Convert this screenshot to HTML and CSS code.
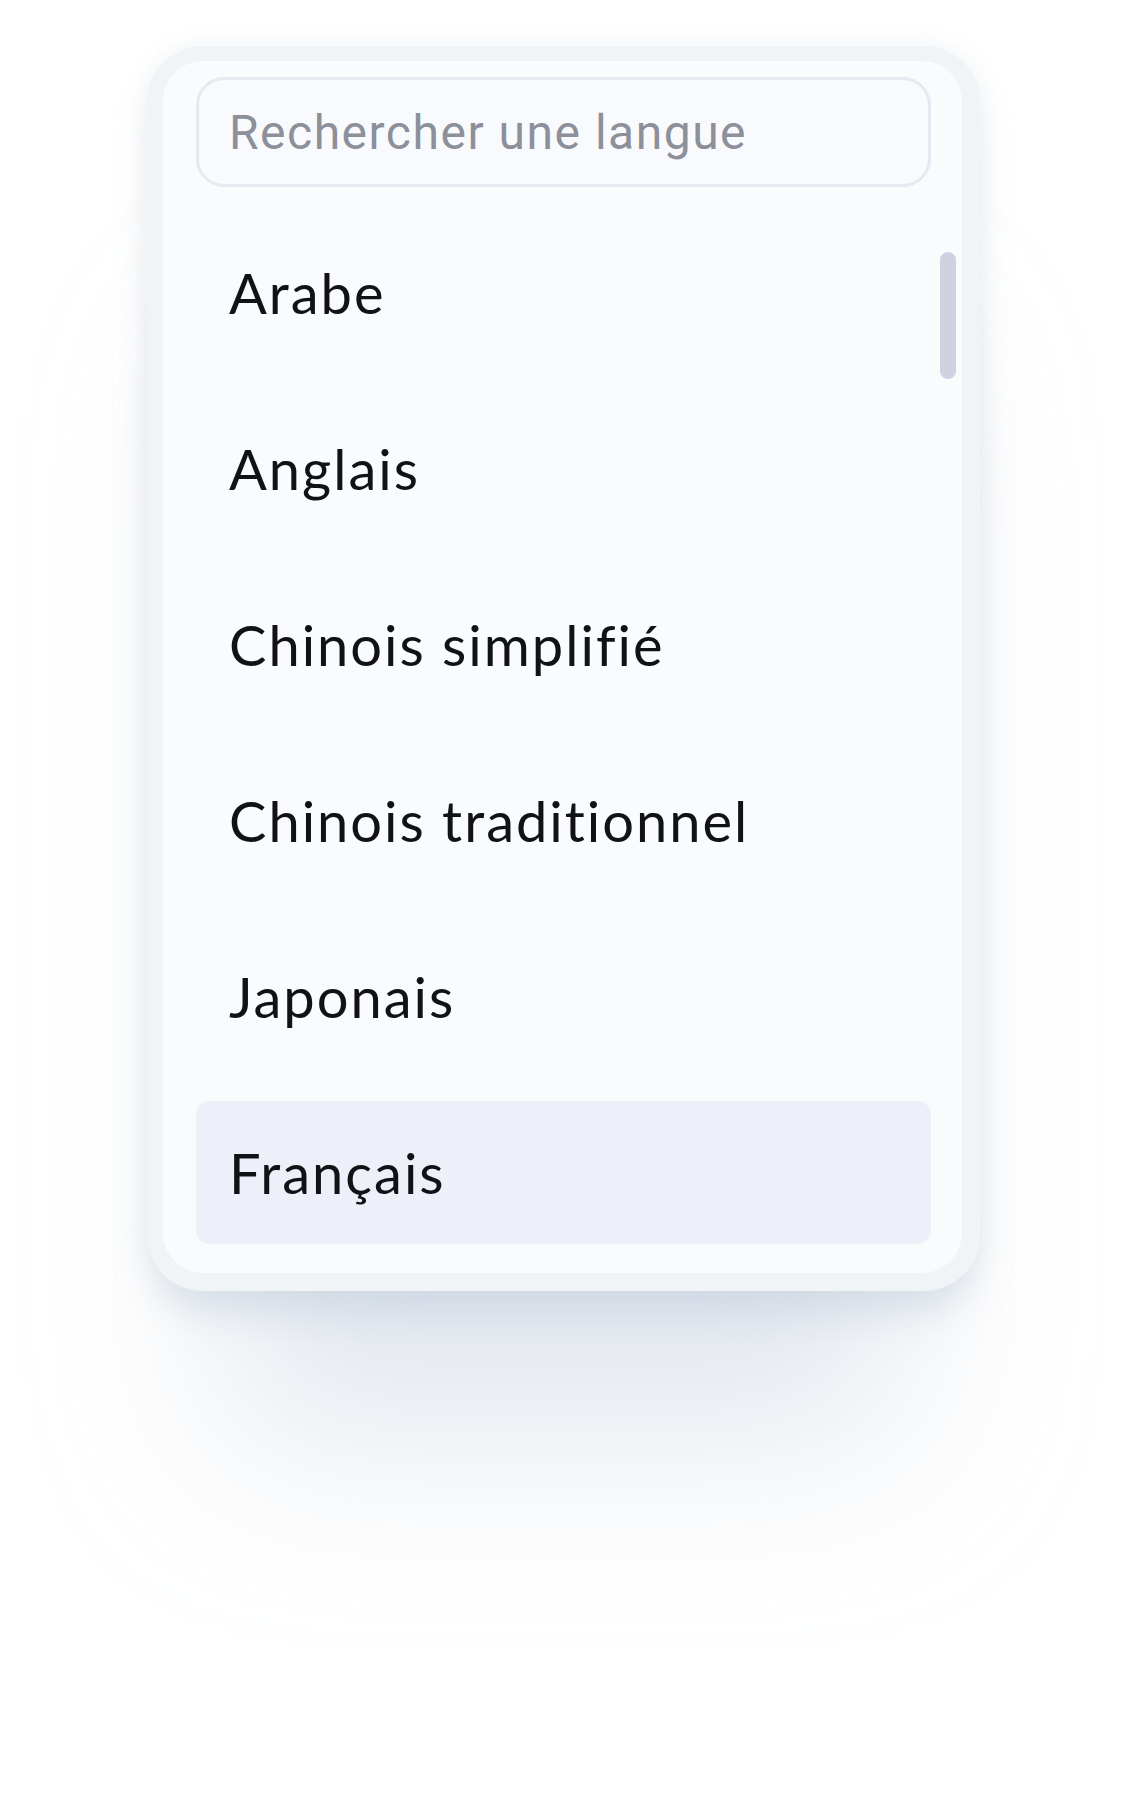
FILE: index.html
```html
<!DOCTYPE html>
<html lang="fr">
<head>
  <meta charset="UTF-8" />
  <meta name="viewport" content="width=device-width, initial-scale=1.0" />
  <title>Langues</title>
  <link rel="stylesheet" href="styles.css">
</head>
<body>
  <div class="card">
    <div class="panel">
      <input class="search" type="text" placeholder="Rechercher une langue" />
      <div class="scrollbar"></div>
      <ul class="list">
        <li class="item">Arabe</li>
        <li class="item">Anglais</li>
        <li class="item">Chinois simplifié</li>
        <li class="item">Chinois traditionnel</li>
        <li class="item">Japonais</li>
        <li class="item selected">Français</li>
      </ul>
    </div>
  </div>
</body>
</html>
```

FILE: styles.css
```css
body {
  margin: 0;
  padding: 0;
  background: #ffffff;
  font-family: Lato, "Noto Sans", sans-serif;
  height: 1812px;
  overflow: hidden;
}
.card {
  box-sizing: border-box;
  width: 833px;
  margin: 46px 0 0 147px;
  padding: 15px 18px 18px 16px;
  border-radius: 56px;
  background: #f1f4f7;
  box-shadow: 0 0 24px rgba(205, 214, 226, 0.3),
    0 30px 40px -10px rgba(170, 185, 205, 0.35),
    0 230px 170px -80px rgba(175, 190, 210, 0.35);
}
.panel {
  position: relative;
  padding: 16px 31px 29px 33px;
  border-radius: 40px;
  background: #fafbfd;
}
.search {
  display: block;
  box-sizing: border-box;
  width: 100%;
  height: 110px;
  padding: 0 30px;
  border: 3px solid #e7e9f2;
  border-radius: 28px;
  background: #f9fafd;
  font-family: Roboto, "Open Sans", sans-serif;
  font-size: 48px;
  letter-spacing: 1.5px;
  color: #222;
  outline: none;
}
.search::placeholder {
  color: #8b909b;
}
.scrollbar {
  position: absolute;
  top: 191px;
  right: 6px;
  width: 16px;
  height: 127px;
  border-radius: 8px;
  background: #cfd2e0;
}
.list {
  list-style: none;
  margin: 34px 0 0;
  padding: 0;
  display: flex;
  flex-direction: column;
  gap: 33px;
}
.item {
  display: flex;
  align-items: center;
  height: 143px;
  padding-left: 33px;
  border-radius: 14px;
  font-size: 56px;
  letter-spacing: 2px;
  font-variant-ligatures: none;
  color: #111215;
}
.selected {
  background: #edf0f8;
}
```
